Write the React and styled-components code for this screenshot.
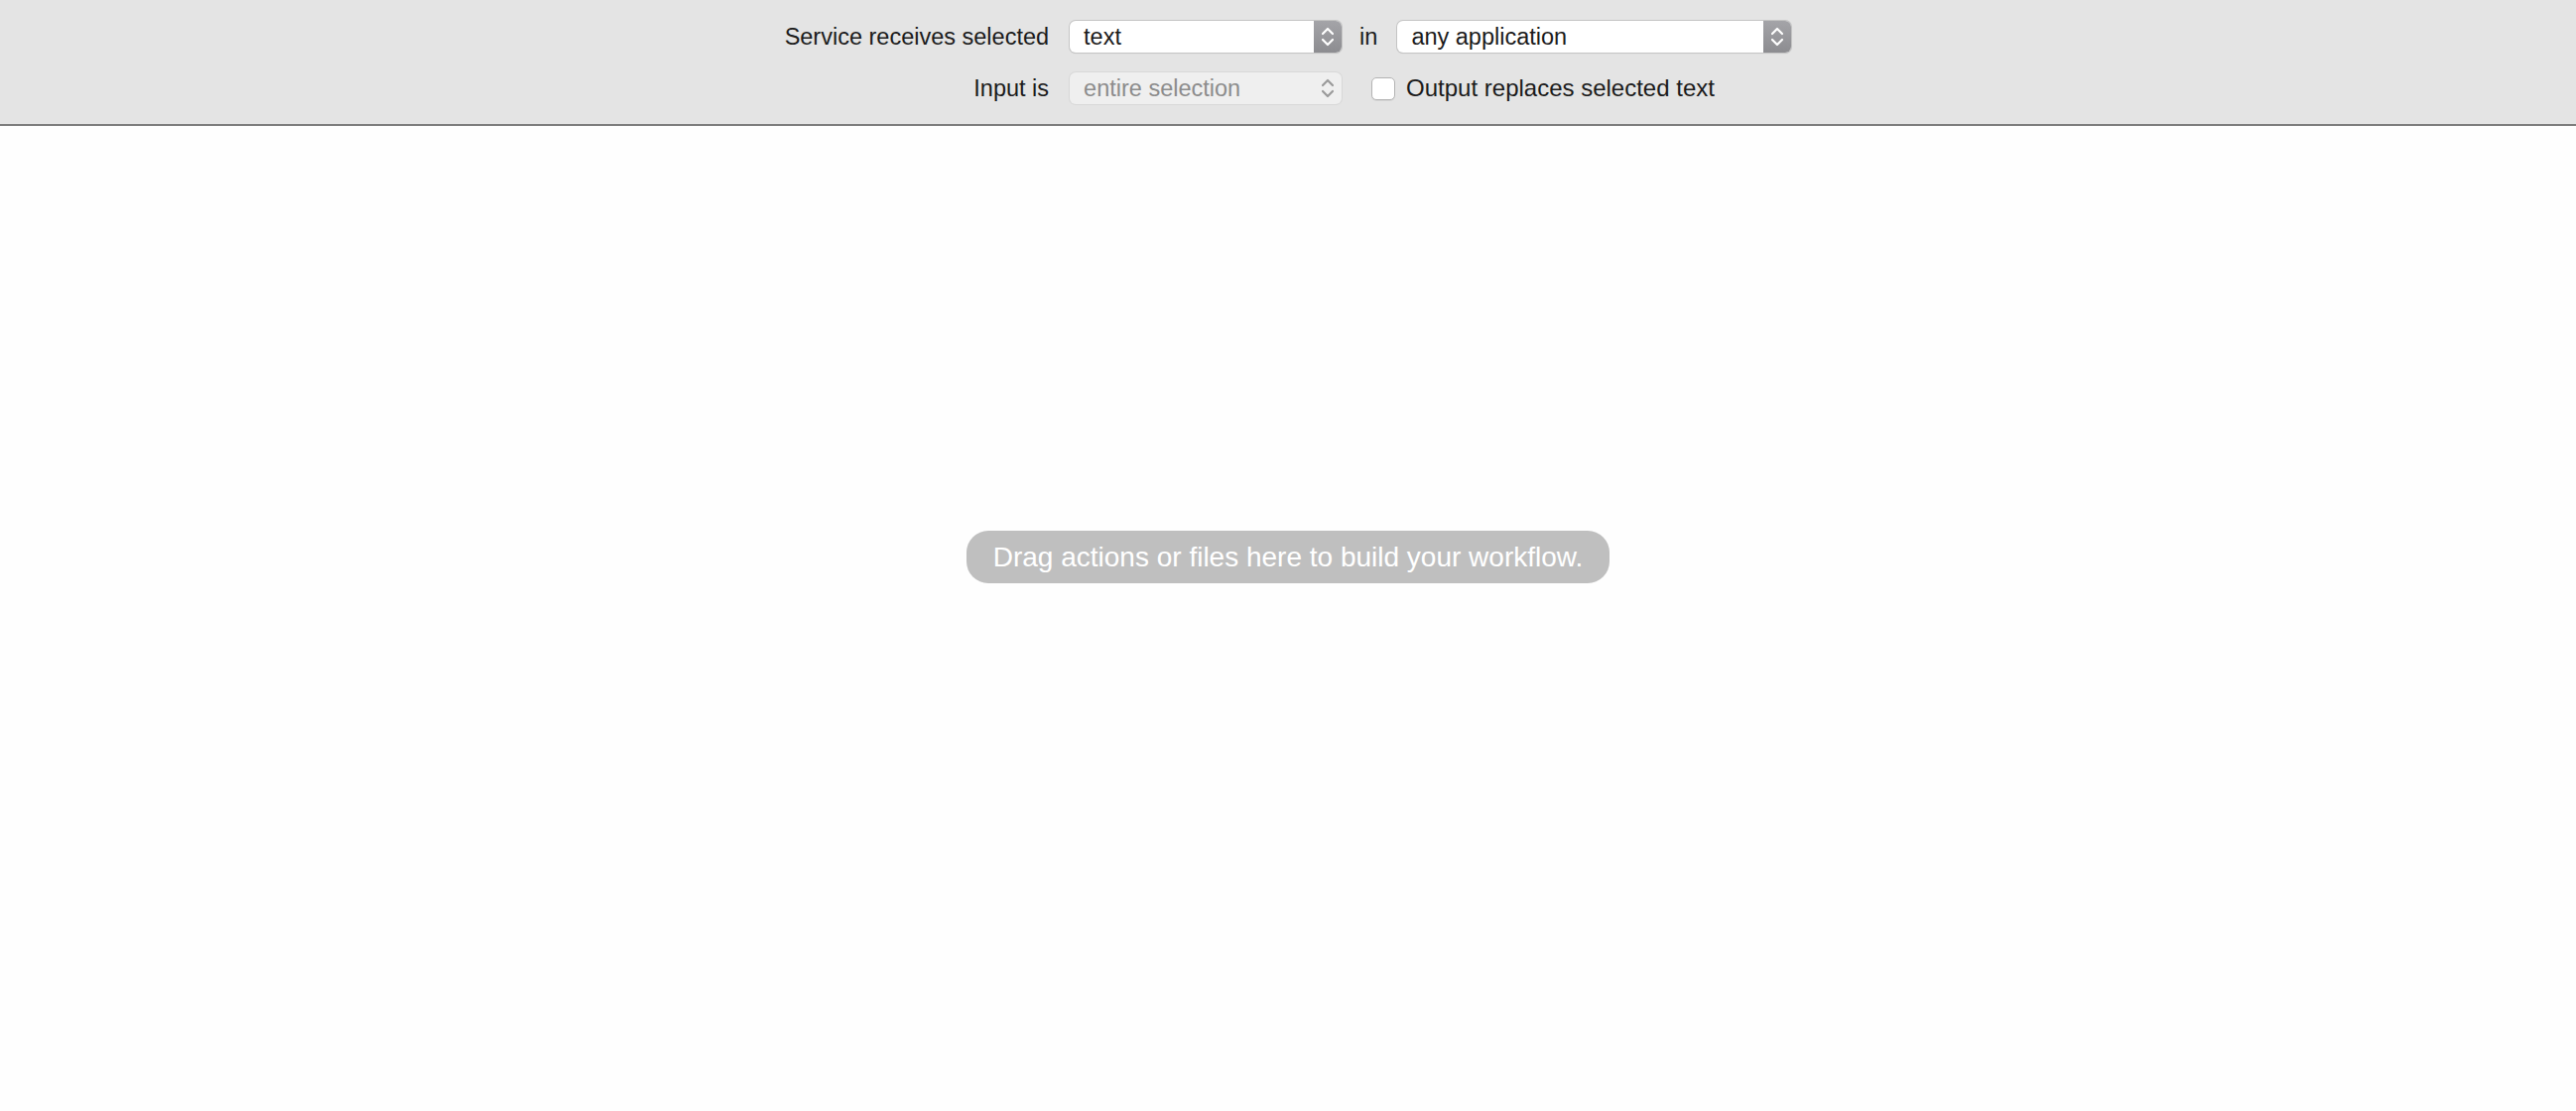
import React from 'react';
import styled, { createGlobalStyle } from 'styled-components';

const GlobalStyle = createGlobalStyle`
  html, body {
    margin: 0;
    padding: 0;
    background: #fefefe;
  }
  body {
    font-family: "Liberation Sans", Arial, Helvetica, sans-serif;
    color: #1b1b1b;
  }
`;

const Window = styled.div`
  width: 2596px;
  height: 1120px;
  display: flex;
  flex-direction: column;
  background: #fefefe;
`;

const Toolbar = styled.div`
  height: 127px;
  box-sizing: border-box;
  background: #e4e4e4;
  border-bottom: 2px solid #7d7d7d;
  padding-top: 21px;
  display: flex;
  justify-content: center;
`;

const Form = styled.div`
  display: grid;
  grid-template-columns: auto 274px auto;
  grid-template-rows: 32px 32px;
  row-gap: 20px;
  align-items: center;
`;

const Label = styled.div`
  font-size: 23.5px;
  text-align: right;
  padding-right: 21px;
  white-space: nowrap;
`;

const Popup = styled.div`
  height: 32px;
  box-sizing: border-box;
  width: ${p => p.$width || 274}px;
  display: flex;
  align-items: stretch;
  border-radius: 6px;
  overflow: hidden;
  background: ${p => (p.$disabled ? '#efefef' : '#ffffff')};
  box-shadow: ${p => (p.$disabled
    ? '0 0 0 1px #d8d8d8'
    : '0 0 0 1px #c4c4c4, 0 1px 1px rgba(0,0,0,0.15)')};
`;

const PopupValue = styled.span`
  flex: 1;
  display: flex;
  align-items: center;
  padding-left: 14px;
  font-size: 23.5px;
  color: ${p => (p.$disabled ? '#8c8c8c' : '#1b1b1b')};
`;

const Stepper = styled.span`
  width: 28px;
  display: flex;
  align-items: center;
  justify-content: center;
  background: ${p => (p.$disabled ? 'transparent' : 'linear-gradient(#a4a4a8, #8c8c90)')};
`;

const Trailing = styled.div`
  display: flex;
  align-items: center;
`;

const InWord = styled.span`
  font-size: 23.5px;
  margin: 0 20px 0 18px;
`;

const Checkbox = styled.span`
  width: 24px;
  height: 23px;
  box-sizing: border-box;
  margin: 0 11px 0 30px;
  border-radius: 5px;
  background: #ffffff;
  border: 1px solid #b3b3b3;
  box-shadow: 0 1px 0 rgba(0,0,0,0.06);
`;

const CheckLabel = styled.span`
  font-size: 24px;
`;

const Canvas = styled.div`
  flex: 1;
  display: flex;
  justify-content: center;
  align-items: flex-start;
  padding-top: 408px;
`;

const Hint = styled.div`
  height: 53px;
  box-sizing: border-box;
  padding: 0 27px;
  display: flex;
  align-items: center;
  border-radius: 22px;
  background: #bfbfbf;
  color: #ffffff;
  font-size: 28px;
  white-space: nowrap;
`;

const Chevrons = ({ color }) => (
  <svg width="14" height="22" viewBox="0 0 14 22">
    <path d="M2 8 L7 3 L12 8" fill="none" stroke={color} strokeWidth="2.2" strokeLinecap="round" strokeLinejoin="round" />
    <path d="M2 14 L7 19 L12 14" fill="none" stroke={color} strokeWidth="2.2" strokeLinecap="round" strokeLinejoin="round" />
  </svg>
);

const Select = ({ value, width, disabled }) => (
  <Popup $width={width} $disabled={disabled}>
    <PopupValue $disabled={disabled}>{value}</PopupValue>
    <Stepper $disabled={disabled}>
      <Chevrons color={disabled ? '#9a9a9a' : '#ffffff'} />
    </Stepper>
  </Popup>
);

export default function App() {
  return (
    <>
      <GlobalStyle />
      <Window>
        <Toolbar>
          <Form>
            <Label>Service receives selected</Label>
            <Select value="text" />
            <Trailing>
              <InWord>in</InWord>
              <Select value="any application" width={397} />
            </Trailing>

            <Label>Input is</Label>
            <Select value="entire selection" disabled />
            <Trailing>
              <Checkbox />
              <CheckLabel>Output replaces selected text</CheckLabel>
            </Trailing>
          </Form>
        </Toolbar>
        <Canvas>
          <Hint>Drag actions or files here to build your workflow.</Hint>
        </Canvas>
      </Window>
    </>
  );
}
